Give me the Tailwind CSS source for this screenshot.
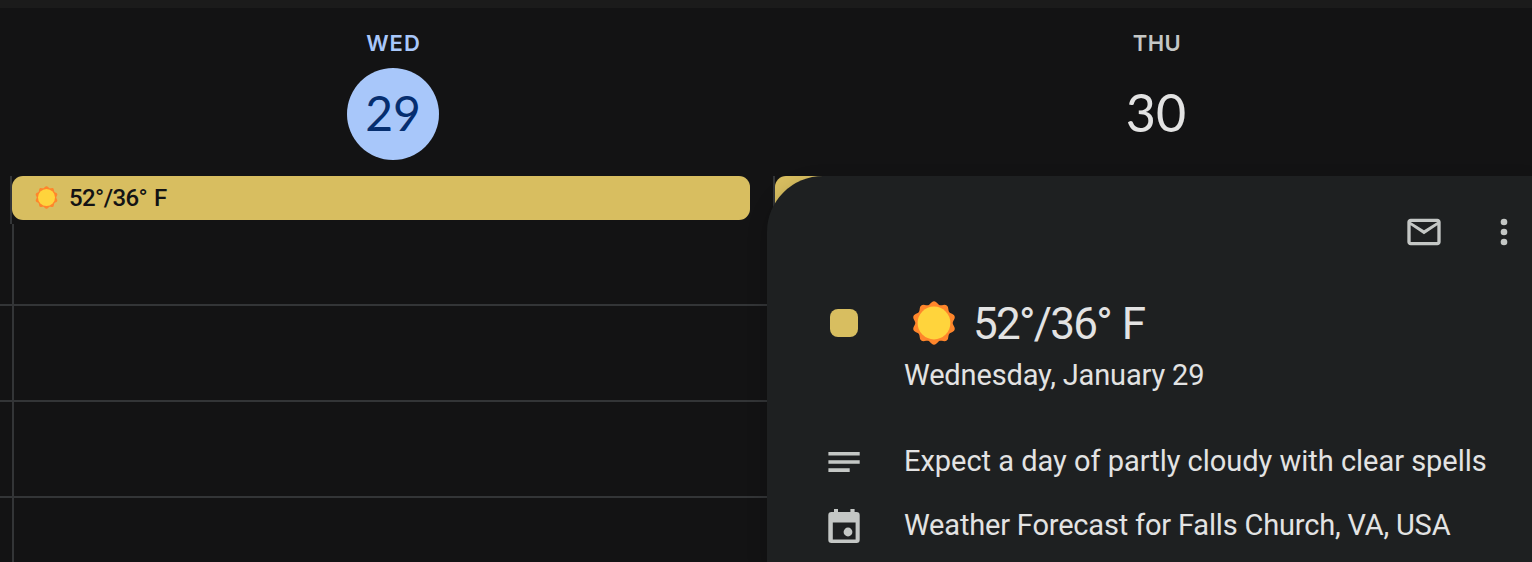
<!DOCTYPE html>
<html lang="en">
<head>
<meta charset="utf-8">
<title>Calendar</title>
<script src="https://cdn.jsdelivr.net/npm/@tailwindcss/browser@4"></script>
</head>
<body class="relative h-[562px] w-[1532px] overflow-hidden bg-[#131314] font-['Roboto',sans-serif] text-[#e3e3e3]">
<svg class="hidden">
  <symbol id="sun" viewBox="-24 -24 48 48">
    <path id="rays" fill="#ff862b"/>
    <circle r="16.4" fill="#ffd43c"/>
  </symbol>
</svg>

<main class="flex h-full flex-col">
  <div class="h-2 shrink-0 bg-[#1b1b1b]"></div>

  <header class="flex h-[168px] shrink-0 pl-[11px] text-center">
    <div class="flex w-[764px] flex-col items-center">
      <div class="mt-[23px] h-6 pl-px font-['Inter',sans-serif] text-[22px]/6 font-semibold tracking-[1px] text-[#a8c7fa]">WED</div>
      <div class="mt-[13px] flex size-[92px] items-center justify-center rounded-full bg-[#a8c7fa] font-['Lato',sans-serif] text-[48px]/[92px] text-[#062e6f]"><span class="-mt-0.5">29</span></div>
    </div>
    <div class="flex grow flex-col items-center pl-[7px]">
      <div class="mt-[23px] h-6 font-['Inter',sans-serif] text-[22px]/6 font-semibold tracking-[0.4px] text-[#c4c7c5]">THU</div>
      <div class="mt-[11px] h-[92px] pr-0.5 font-['Lato',sans-serif] text-[52px]/[92px]">30</div>
    </div>
  </header>

  <section class="flex h-12 shrink-0 pl-[10px]">
    <div class="w-[763px] border-l-2 border-[#333537]">
      <div class="flex h-11 w-[738px] items-center rounded-[11px] bg-[#d8be60] pl-[22px] text-[#131314]">
        <svg class="-mt-0.5 size-[25px]"><use href="#sun"/></svg>
        <span class="ml-[10px] text-[24px]/[44px] font-medium tracking-[-0.6px] [word-spacing:1.5px]">52°/36° F</span>
      </div>
    </div>
    <div class="grow border-l-2 border-[#333537]">
      <div class="h-11 w-[738px] rounded-[11px] bg-[#d8be60]"></div>
    </div>
  </section>

  <section class="flex grow">
    <div class="flex w-3 shrink-0 flex-col">
      <div class="h-[82px] border-b-2 border-[#333537]"></div>
      <div class="h-24 border-b-2 border-[#333537]"></div>
      <div class="h-24 border-b-2 border-[#333537]"></div>
    </div>
    <div class="flex grow flex-col border-l-2 border-[#333537]">
      <div class="h-[82px] border-b-2 border-[#333537]"></div>
      <div class="h-24 border-b-2 border-[#333537]"></div>
      <div class="h-24 border-b-2 border-[#333537]"></div>
    </div>
  </section>
</main>

<aside class="absolute top-[176px] left-[767px] flex h-[386px] w-[765px] flex-col rounded-tl-[56px] bg-[#1e2021] pl-[57px] shadow-[0_8px_20px_rgba(0,0,0,0.22)]">
  <div class="flex h-28 items-center justify-end gap-10 pr-2 text-[#c4c7c5]">
    <svg class="size-10" viewBox="0 0 24 24" fill="currentColor"><path d="M22 6c0-1.100-.9-2-2-2H4c-1.100 0-2 .9-2 2v12c0 1.100.9 2 2 2h16c1.100 0 2-.9 2-2V6zm-2 0-8 5-8-5h16zm0 12H4V8l8 5.400 8-5.400v10z"/></svg>
    <svg class="size-10" viewBox="0 0 24 24" fill="currentColor"><circle cx="12" cy="6" r="2"/><circle cx="12" cy="12" r="2"/><circle cx="12" cy="18" r="2"/></svg>
  </div>
  <div class="flex h-[142px]">
    <div class="mt-[21px] ml-[6px] size-7 rounded-lg bg-[#d8be60]"></div>
    <div class="ml-[46px] flex flex-col">
      <div class="mt-3 flex h-12 items-center pl-[6px]">
        <svg class="-mt-0.5 size-12"><use href="#sun"/></svg>
        <span class="ml-[15px] text-[44px]/[48px] tracking-[-1.7px] [word-spacing:1.5px]">52°/36° F</span>
      </div>
      <div class="mt-[7px] h-10 text-[29px]/10 tracking-[-0.15px]">Wednesday, January 29</div>
    </div>
  </div>
  <div class="flex h-16 items-center gap-10">
    <svg class="size-10" viewBox="0 0 40 40" fill="#c4c7c5"><path d="M4.400 10h31.300v3.600H4.400zM4.400 18.300h31.300v3.500H4.400zM4.400 26.300h21.300v3.600H4.400z"/></svg>
    <span class="pb-0.5 text-[29px]/[62px] tracking-[-0.02px] whitespace-nowrap">Expect a day of partly cloudy with clear spells</span>
  </div>
  <div class="flex h-16 items-center gap-10">
    <svg class="size-10" viewBox="0 0 40 40" fill="#c4c7c5"><path fill-rule="evenodd" d="M10 3h4v3h12.400V3h4.200v3h1.900a3.200 3.200 0 0 1 3.200 3.200v24.600a3.200 3.200 0 0 1-3.200 3.200h-25a3.200 3.200 0 0 1-3.200-3.200V9.200A3.200 3.200 0 0 1 7.500 6H10zM8.800 16.500v17h22.800v-17z"/><circle cx="24" cy="26" r="4.400"/></svg>
    <span class="pb-0.5 text-[29px]/[62px] tracking-[-0.18px] whitespace-nowrap">Weather Forecast for Falls Church, VA, USA</span>
  </div>
</aside>

<script>
  // Wavy outline with ten rounded rays around the sun disc
  let d = '';
  for (let i = 0; i < 120; i++) {
    const a = i * Math.PI / 60, r = 20.2 + 1.5 * Math.cos(10 * a);
    d += (i ? 'L' : 'M') + (r * Math.sin(a)).toFixed(2) + ' ' + (-r * Math.cos(a)).toFixed(2);
  }
  document.getElementById('rays').setAttribute('d', d + 'Z');
</script>
</body>
</html>
